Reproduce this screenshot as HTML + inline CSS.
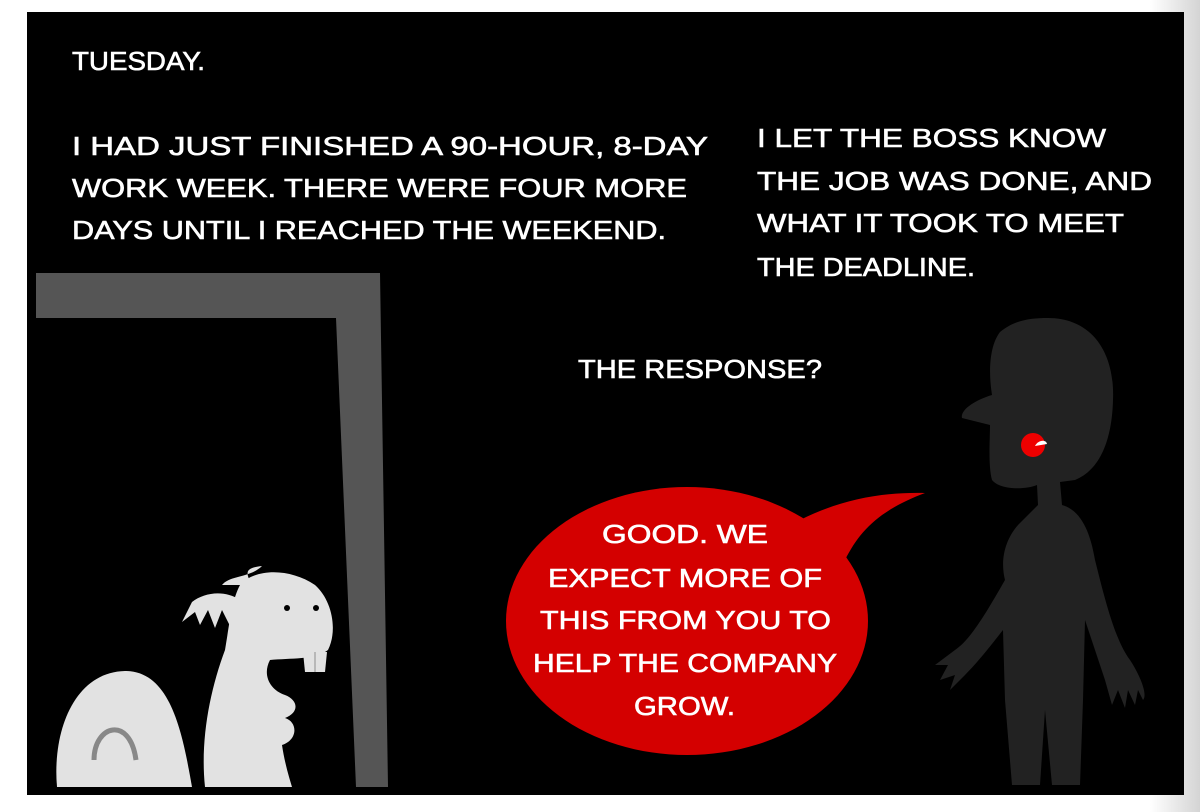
<!DOCTYPE html>
<html><head><meta charset="utf-8"><style>
html,body{margin:0;padding:0;width:1200px;height:812px;overflow:hidden;background:linear-gradient(to right,#fff 0,#fff 1150px,#d4d4d4 1200px);}
svg{position:absolute;left:0;top:0}
text{font-family:"Liberation Sans",sans-serif;font-size:26px;fill:#fff;stroke:#fff;stroke-width:0.6;}
</style></head><body>
<svg width="1200" height="812" viewBox="0 0 1200 812">
<rect x="27" y="12" width="1157" height="783" fill="#000"/>
<path d="M36 273 L380 273 L388 787 L356 787 L336 318 L36 318 Z" fill="#555"/>
<g fill="#e2e2e2">
<path d="M57 787 C52 730 75 672 125 671 C170 671 182 730 192 787 Z"/>
<path d="M205 787 C200 740 210 690 225 650 C230 620 232 600 240 585 C255 568 290 568 315 585 C332 600 338 630 328 650 C315 660 290 658 270 660 C262 675 270 690 285 695 C298 700 300 712 285 718 C298 722 298 740 282 745 C285 765 290 780 292 787 Z"/>
<path d="M240 600 C225 590 205 592 192 602 L182 622 L195 612 L200 625 L208 610 L215 628 L222 610 L232 630 Z"/>
<path d="M252 585 C245 572 245 568 262 566 C250 578 230 575 222 585 Z"/>
<path d="M303 652 L327 652 L325 672 L305 672 Z"/>
</g>
<path d="M94 760 C94 725 130 715 136 760" stroke="#888" stroke-width="5" fill="none"/>
<circle cx="287" cy="608" r="3" fill="#000"/><circle cx="316" cy="608" r="3" fill="#000"/>
<line x1="315" y1="652" x2="315" y2="672" stroke="#aaa" stroke-width="1.5"/>
<ellipse cx="687" cy="621" rx="181" ry="134" fill="#d40000"/>
<path d="M800 520 C840 500 880 492 925 493 C880 510 860 530 845 560 Z" fill="#d40000"/>
<g fill="#222">
<path d="M1048 318 C1090 318 1115 350 1113 400 C1112 440 1100 470 1075 480 L1060 482 L1062 505 C1080 510 1090 530 1095 560 C1105 600 1115 640 1130 660 C1140 675 1148 695 1143 700 L1138 690 L1135 705 L1128 690 L1125 708 L1118 690 L1112 705 L1105 680 L1095 650 L1085 620 L1083 700 L1080 785 L1052 785 L1045 710 L1040 785 L1012 785 L1005 700 L1003 630 C995 640 980 660 965 675 L950 690 L955 675 L940 680 L948 665 L935 665 L955 650 C970 640 985 615 1005 580 C1000 560 1005 540 1018 525 L1038 505 L1037 485 C1025 490 1000 490 992 480 C988 465 990 440 990 425 L962 418 C960 410 975 400 992 395 C988 370 990 345 1000 332 C1015 320 1030 318 1048 318 Z"/>
</g>
<circle cx="1033" cy="445" r="12" fill="#e00"/>
<path d="M1035 446 C1038 440 1046 439 1047 444 Z" fill="#fff"/>
<text x="72" y="70" textLength="133" lengthAdjust="spacingAndGlyphs">TUESDAY.</text>
<text x="72" y="155" textLength="636" lengthAdjust="spacingAndGlyphs">I HAD JUST FINISHED A 90-HOUR, 8-DAY</text>
<text x="72" y="197" textLength="615" lengthAdjust="spacingAndGlyphs">WORK WEEK. THERE WERE FOUR MORE</text>
<text x="72" y="239" textLength="594" lengthAdjust="spacingAndGlyphs">DAYS UNTIL I REACHED THE WEEKEND.</text>
<text x="757" y="147" textLength="349" lengthAdjust="spacingAndGlyphs">I LET THE BOSS KNOW</text>
<text x="757" y="190" textLength="395" lengthAdjust="spacingAndGlyphs">THE JOB WAS DONE, AND</text>
<text x="757" y="232" textLength="367" lengthAdjust="spacingAndGlyphs">WHAT IT TOOK TO MEET</text>
<text x="757" y="276" textLength="218" lengthAdjust="spacingAndGlyphs">THE DEADLINE.</text>
<text x="578" y="378" textLength="244" lengthAdjust="spacingAndGlyphs">THE RESPONSE?</text>
<text x="602" y="543" textLength="166" lengthAdjust="spacingAndGlyphs">GOOD. WE</text>
<text x="548" y="587" textLength="274" lengthAdjust="spacingAndGlyphs">EXPECT MORE OF</text>
<text x="540" y="629" textLength="291" lengthAdjust="spacingAndGlyphs">THIS FROM YOU TO</text>
<text x="533" y="672" textLength="304" lengthAdjust="spacingAndGlyphs">HELP THE COMPANY</text>
<text x="634" y="715" textLength="101" lengthAdjust="spacingAndGlyphs">GROW.</text>
</svg>
</body></html>
